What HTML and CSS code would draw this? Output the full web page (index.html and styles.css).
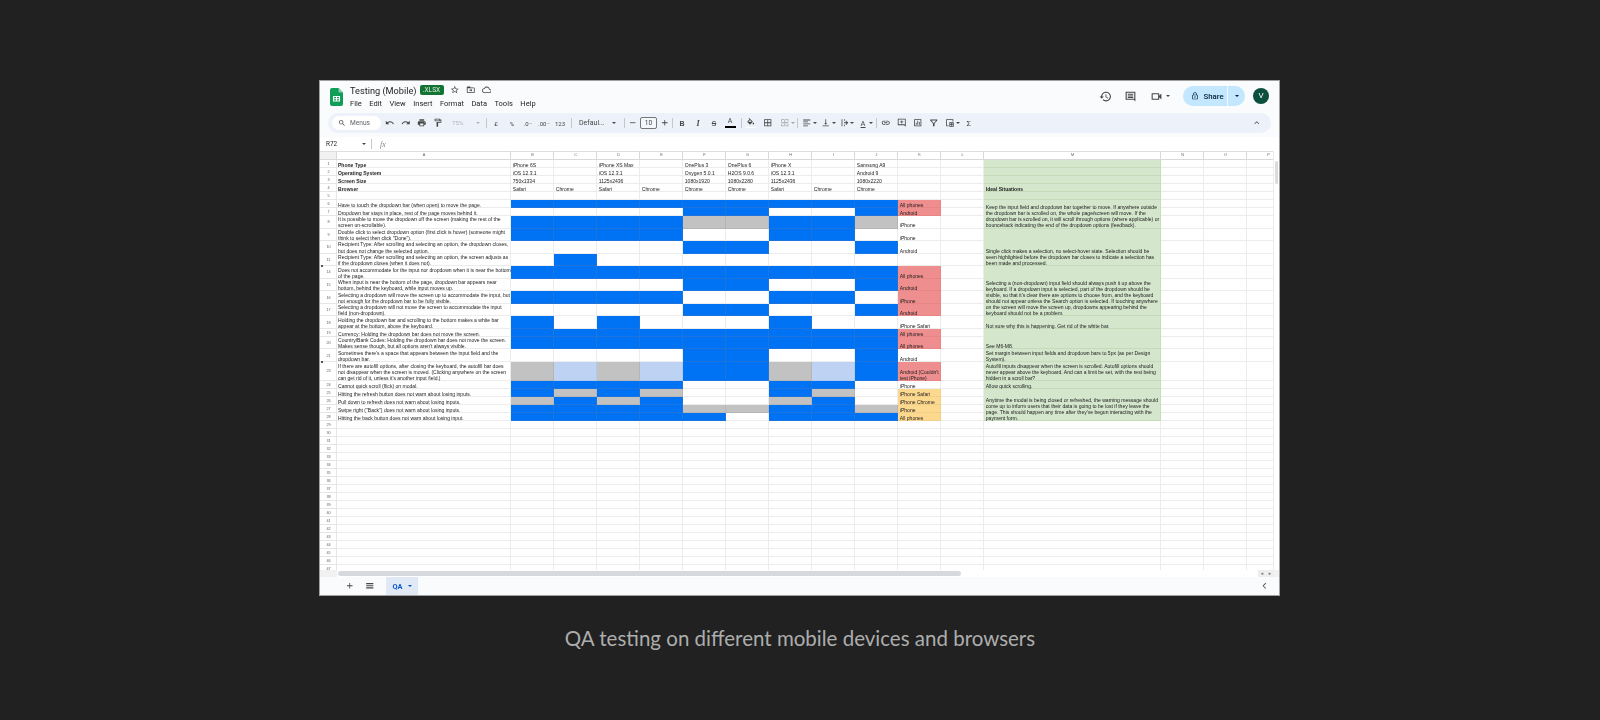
FILE: index.html
```html
<!DOCTYPE html>
<html lang="en">
<head>
    <meta charset="UTF-8">
    <title>QA testing</title>
    <link rel="stylesheet" href="styles.css">
</head>
<body>
<div class="window">
    <div class="head">
        <svg class="logo" viewBox="0 0 13 18"><path fill="#0f9d58" d="M2 0h6.5L13 4.5V16a2 2 0 0 1-2 2H2a2 2 0 0 1-2-2V2a2 2 0 0 1 2-2z"/><path fill="#87ceac" d="M8.5 0L13 4.5H9.5a1 1 0 0 1-1-1z"/><path fill="#fff" d="M3 8h7v5.5H3zM4 9v1.2h2V9zm3 0v1.2h2V9zm-3 2.2v1.3h2v-1.3zm3 0v1.3h2v-1.3z" fill-rule="evenodd"/></svg>
        <div class="doc">
            <div class="doc-title">
                <span class="name">Testing (Mobile)</span>
                <span class="badge">.XLSX</span>
                <span class="ic"><svg viewBox="0 0 24 24"><path d="M22 9.24l-7.19-.62L12 2 9.19 8.63 2 9.24l5.46 4.73L5.82 21 12 17.27 18.18 21l-1.63-7.03L22 9.24zM12 15.4l-3.76 2.27 1-4.28-3.32-2.88 4.38-.38L12 6.1l1.71 4.04 4.38.38-3.32 2.88 1 4.28L12 15.4z"/></svg></span>
                <span class="ic"><svg viewBox="0 0 24 24"><path d="M20 6h-8l-2-2H4c-1.1 0-2 .9-2 2v12c0 1.1.9 2 2 2h16c1.1 0 2-.9 2-2V8c0-1.1-.9-2-2-2zm0 12H4V8h16v10zm-8-1l4-4-4-4v3H8v2h4z"/></svg></span>
                <span class="ic"><svg viewBox="0 0 24 24"><path d="M19.35 10.04C18.67 6.59 15.64 4 12 4 9.11 4 6.6 5.64 5.35 8.04 2.34 8.36 0 10.91 0 14c0 3.31 2.69 6 6 6h13c2.76 0 5-2.24 5-5 0-2.64-2.05-4.78-4.65-4.96zM19 18H6c-2.21 0-4-1.79-4-4 0-2.05 1.53-3.76 3.56-3.97l1.07-.11.5-.95C8.08 7.14 9.94 6 12 6c2.62 0 4.88 1.86 5.39 4.43l.3 1.5 1.53.11c1.56.1 2.78 1.41 2.78 2.96 0 1.65-1.35 3-3 3z"/></svg></span>
            </div>
            <div class="menu">
                <span>File</span><span>Edit</span><span>View</span><span>Insert</span><span>Format</span><span>Data</span><span>Tools</span><span>Help</span>
            </div>
        </div>
        <div class="actions">
            <span class="act"><svg viewBox="0 0 24 24"><path d="M13 3c-4.97 0-9 4.03-9 9H1l3.89 3.89.07.14L9 12H6c0-3.87 3.13-7 7-7s7 3.13 7 7-3.13 7-7 7c-1.93 0-3.68-.79-4.94-2.06l-1.42 1.42C8.27 19.99 10.51 21 13 21c4.97 0 9-4.03 9-9s-4.03-9-9-9zm-1 5v5l4.28 2.54.72-1.21-3.5-2.08V8H12z"/></svg></span>
            <span class="act"><svg viewBox="0 0 24 24"><path d="M3 3h18v18l-3-3H3zm2 2v11h14V5zm2 2h10v1.8H7zm0 3h10v1.8H7zm0 3h10v1.8H7z" fill-rule="evenodd"/></svg></span>
            <span class="act act-meet"><svg viewBox="0 0 24 24"><path d="M15 8v8H5V8h10m1-2H4c-.55 0-1 .45-1 1v10c0 .55.45 1 1 1h12c.55 0 1-.45 1-1v-3.5l4 4v-11l-4 4V7c0-.55-.45-1-1-1z"/></svg><i class="car"></i></span>
            <div class="share">
                <span class="share-main"><svg viewBox="0 0 24 24"><path d="M18 8h-1V6c0-2.76-2.24-5-5-5S7 3.24 7 6v2H6c-1.1 0-2 .9-2 2v10c0 1.1.9 2 2 2h12c1.1 0 2-.9 2-2V10c0-1.1-.9-2-2-2zM9 6c0-1.66 1.34-3 3-3s3 1.34 3 3v2H9zm9 14H6V10h12zm-6-3c1.1 0 2-.9 2-2s-.9-2-2-2-2 .9-2 2 .9 2 2 2z"/></svg>Share</span>
                <span class="share-more"><i class="car"></i></span>
            </div>
            <span class="avatar">V</span>
        </div>
    </div>

    <div class="toolbar">
        <div class="search"><svg viewBox="0 0 24 24"><path d="M15.5 14h-.79l-.28-.27C15.41 12.59 16 11.11 16 9.5 16 5.91 13.09 3 9.5 3S3 5.91 3 9.5 5.91 16 9.5 16c1.61 0 3.09-.59 4.23-1.57l.27.28v.79l5 4.99L20.49 19l-4.99-5zm-6 0C7.01 14 5 11.99 5 9.5S7.01 5 9.5 5 14 7.01 14 9.5 11.99 14 9.5 14z"/></svg>Menus</div>
        <span class="ic"><svg viewBox="0 0 24 24"><path d="M12.5 8c-2.65 0-5.05.99-6.9 2.6L2 7v9h9l-3.62-3.62c1.39-1.16 3.16-1.88 5.12-1.88 3.54 0 6.55 2.31 7.6 5.5l2.37-.78C21.08 11.03 17.15 8 12.5 8z"/></svg></span>
        <span class="ic"><svg viewBox="0 0 24 24"><path d="M18.4 10.6C16.55 8.99 14.15 8 11.5 8c-4.65 0-8.58 3.03-9.96 7.22L3.9 16c1.05-3.19 4.05-5.5 7.6-5.5 1.95 0 3.73.72 5.12 1.88L13 16h9V7l-3.6 3.6z"/></svg></span>
        <span class="ic"><svg viewBox="0 0 24 24"><path d="M19 8H5c-1.66 0-3 1.34-3 3v6h4v4h12v-4h4v-6c0-1.66-1.34-3-3-3zm-3 11H8v-5h8v5zm3-7c-.55 0-1-.45-1-1s.45-1 1-1 1 .45 1 1-.45 1-1 1zm-1-9H6v4h12V3z"/></svg></span>
        <span class="ic"><svg viewBox="0 0 24 24"><path d="M18 4V3c0-.55-.45-1-1-1H5c-.55 0-1 .45-1 1v4c0 .55.45 1 1 1h12c.55 0 1-.45 1-1V6h1v4H9v11c0 .55.45 1 1 1h2c.55 0 1-.45 1-1v-9h8V4h-3zm-2 2H6V4h10z" fill-rule="evenodd"/></svg></span>
        <span class="zoom">75%<i class="car"></i></span>
        <i class="sep sep-a"></i>
        <span class="ic tx">£</span>
        <span class="ic tx">%</span>
        <span class="ic tx">.0<sub>←</sub></span>
        <span class="ic tx">.00<sub>→</sub></span>
        <span class="ic tx">123</span>
        <i class="sep sep-b"></i>
        <span class="font">Defaul...<i class="car"></i></span>
        <i class="sep sep-a"></i>
        <span class="ic ic-s"><svg viewBox="0 0 24 24"><path d="M5 11h14v2H5z"/></svg></span>
        <span class="size">10</span>
        <span class="ic ic-s ic-plus"><svg viewBox="0 0 24 24"><path d="M11 5h2v6h6v2h-6v6h-2v-6H5v-2h6z"/></svg></span>
        <i class="sep sep-c"></i>
        <span class="ic tx bold">B</span>
        <span class="ic tx ital">I</span>
        <span class="ic tx strike">S</span>
        <span class="ic tx color">A</span>
        <i class="sep sep-d"></i>
        <span class="ic fill"><svg viewBox="0 0 24 24"><path d="M16.56 8.94L7.62 0 6.21 1.41l2.38 2.38-5.15 5.15c-.59.59-.59 1.54 0 2.12l5.5 5.5c.29.29.68.44 1.06.44s.77-.15 1.06-.44l5.5-5.5c.59-.58.59-1.53 0-2.12zM5.21 10L10 5.21 14.79 10H5.21zM19 11.5s-2 2.17-2 3.5c0 1.1.9 2 2 2s2-.9 2-2c0-1.33-2-3.5-2-3.5z"/></svg></span>
        <span class="ic ic-g"><svg viewBox="0 0 24 24"><path d="M3 3h18v18H3zm2 2v6h6V5zm8 0v6h6V5zM5 13v6h6v-6zm8 0v6h6v-6z" fill-rule="evenodd"/></svg></span>
        <span class="ic ic-g off"><svg viewBox="0 0 24 24"><path d="M3 3h7v2H5v4H3zm11 0h7v6h-2V5h-5zM3 15h2v4h5v2H3zm16 0h2v6h-7v-2h5zM11 3h2v7h-2zm0 11h2v7h-2zM3 11h18v2H3z"/></svg></span>
        <i class="car car-n off"></i>
        <i class="sep sep-e"></i>
        <span class="ic"><svg viewBox="0 0 24 24"><path d="M3 4h18v2H3zm0 5h12v2H3zm0 5h18v2H3zm0 5h12v2H3z"/></svg></span>
        <i class="car car-n"></i>
        <span class="ic"><svg viewBox="0 0 24 24"><path d="M16 13h-3V3h-2v10H8l4 4 4-4zM4 19v2h16v-2H4z"/></svg></span>
        <i class="car car-n"></i>
        <span class="ic"><svg viewBox="0 0 24 24"><path d="M4 3h2v18H4zm6 8h7l-3-3 1.4-1.4L21 12l-5.6 5.4L14 16l3-3h-7zm0-8h2v4h-2zm0 14h2v4h-2z"/></svg></span>
        <i class="car car-n"></i>
        <span class="ic tx rotate">A</span>
        <i class="car car-n"></i>
        <i class="sep sep-f"></i>
        <span class="ic"><svg viewBox="0 0 24 24"><path d="M3.9 12c0-1.71 1.39-3.1 3.1-3.1h4V7H7c-2.76 0-5 2.24-5 5s2.24 5 5 5h4v-1.9H7c-1.71 0-3.1-1.39-3.1-3.1zM8 13h8v-2H8v2zm9-6h-4v1.9h4c1.71 0 3.1 1.39 3.1 3.1s-1.39 3.1-3.1 3.1h-4V17h4c2.76 0 5-2.24 5-5s-2.24-5-5-5z"/></svg></span>
        <span class="ic"><svg viewBox="0 0 24 24"><path d="M2 2h20v20l-4-4H2zm2 2v12h15l1 1V4zm7 2h2v3h3v2h-3v3h-2v-3H8V9h3z" fill-rule="evenodd"/></svg></span>
        <span class="ic"><svg viewBox="0 0 24 24"><path d="M3 3h18v18H3zm2 2v14h14V5zm2 7h2v5H7zm4-5h2v10h-2zm4 3h2v7h-2z" fill-rule="evenodd"/></svg></span>
        <span class="ic"><svg viewBox="0 0 24 24"><path d="M3 4h18v2l-7 8v7h-4v-7L3 6zm3 2l6 7 6-7z" fill-rule="evenodd"/></svg></span>
        <span class="ic"><svg viewBox="0 0 24 24"><path d="M3 3h18v6h-2V5H5v14h4v2H3zm8 8h11v11H11zm2 2v2h3v-2zm5 0v2h2v-2zm-5 4v3h3v-3zm5 0v3h2v-3z" fill-rule="evenodd"/></svg></span>
        <i class="car car-n"></i>
        <span class="ic tx sigma">Σ</span>
        <span class="ic collapse"><svg viewBox="0 0 24 24"><path d="M12 8l-6 6 1.4 1.4 4.6-4.6 4.6 4.6L18 14z"/></svg></span>
    </div>

    <div class="formula">
        <span class="cell-ref">R72</span>
        <i class="car"></i>
        <i class="sep"></i>
        <span class="fx">fx</span>
    </div>

    <div class="sheet">
        <div class="grid">
            <table>
                <colgroup>
                    <col class="c-h"><col class="c-a">
                    <col class="c-n"><col class="c-n"><col class="c-n"><col class="c-n"><col class="c-n"><col class="c-n"><col class="c-n"><col class="c-n"><col class="c-n">
                    <col class="c-n"><col class="c-n"><col class="c-m"><col class="c-n"><col class="c-n"><col class="c-n">
                </colgroup>
                <tr class="letters"><th></th><th>A</th><th>B</th><th>C</th><th>D</th><th>E</th><th>F</th><th>G</th><th>H</th><th>I</th><th>J</th><th>K</th><th>L</th><th>M</th><th>N</th><th>O</th><th>P</th></tr>
                <tr><th>1</th><td class="lb">Phone Type</td><td>iPhone 6S</td><td></td><td>iPhone XS Max</td><td></td><td>OnePlus 3</td><td>OnePlus 6</td><td>iPhone X</td><td></td><td>Samsung A9</td><td></td><td></td><td class="m"></td><td></td><td></td><td></td></tr>
                <tr><th>2</th><td class="lb">Operating System</td><td>iOS 12.3.1</td><td></td><td>iOS 12.3.1</td><td></td><td>Oxygen 5.0.1</td><td>H2OS 9.0.6</td><td>iOS 12.3.1</td><td></td><td>Android 9</td><td></td><td></td><td class="m"></td><td></td><td></td><td></td></tr>
                <tr><th>3</th><td class="lb">Screen Size</td><td>750x1334</td><td></td><td>1125x2436</td><td></td><td>1080x1920</td><td>1080x2280</td><td>1125x2436</td><td></td><td>1080x2220</td><td></td><td></td><td class="m"></td><td></td><td></td><td></td></tr>
                <tr><th>4</th><td class="lb">Browser</td><td>Safari</td><td>Chrome</td><td>Safari</td><td>Chrome</td><td>Chrome</td><td>Chrome</td><td>Safari</td><td>Chrome</td><td>Chrome</td><td></td><td></td><td class="m lb">Ideal Situations</td><td></td><td></td><td></td></tr>
                <tr><th>5</th><td></td><td></td><td></td><td></td><td></td><td></td><td></td><td></td><td></td><td></td><td></td><td></td><td class="m"></td><td></td><td></td><td></td></tr>
                <tr><th>6</th><td>Have to touch the dropdown bar (when open) to move the page.</td><td class="b"></td><td class="b"></td><td class="b"></td><td class="b"></td><td class="b"></td><td class="b"></td><td class="b"></td><td class="b"></td><td class="b"></td><td class="r">All phones</td><td></td><td class="m" rowspan="3">Keep the input field and dropdown bar together to move. If anywhere outside the dropdown bar is scrolled on, the whole page/screen will move. If the dropdown bar is scrolled on, it will scroll through options (where applicable) or bounceback indicating the end of the dropdown options (feedback).</td><td></td><td></td><td></td></tr>
                <tr><th>7</th><td>Dropdown bar stays in place, rest of the page moves behind it.</td><td></td><td></td><td></td><td></td><td class="b"></td><td class="b"></td><td></td><td></td><td class="b"></td><td class="r">Android</td><td></td><td></td><td></td><td></td></tr>
                <tr class="t2"><th>8</th><td>It is possible to move the dropdown off the screen (making the rest of the screen un-scrollable).</td><td class="b"></td><td class="b"></td><td class="b"></td><td class="b"></td><td class="g"></td><td class="g"></td><td class="b"></td><td class="b"></td><td class="g"></td><td>iPhone</td><td></td><td></td><td></td><td></td></tr>
                <tr class="t2"><th>9</th><td>Double click to select dropdown option (first click is hover) (someone might think to select then click "Done").</td><td class="b"></td><td class="b"></td><td class="b"></td><td class="b"></td><td></td><td></td><td class="b"></td><td class="b"></td><td></td><td>iPhone</td><td></td><td class="m" rowspan="3">Single click makes a selection, no select-hover state. Selection should be seen highlighted before the dropdown bar closes to indicate a selection has been made and processed.</td><td></td><td></td><td></td></tr>
                <tr class="t2"><th>10</th><td>Recipient Type: After scrolling and selecting an option, the dropdown closes, but does not change the selected option.</td><td></td><td></td><td></td><td></td><td class="b"></td><td class="b"></td><td></td><td></td><td class="b"></td><td>Android</td><td></td><td></td><td></td><td></td></tr>
                <tr class="t2"><th class="fold-b">11</th><td>Recipient Type: After scrolling and selecting an option, the screen adjusts as if the dropdown closes (when it does not).</td><td></td><td class="b"></td><td></td><td></td><td></td><td></td><td></td><td></td><td></td><td></td><td></td><td></td><td></td><td></td></tr>
                <tr class="t2"><th class="fold-t">14</th><td>Does not accommodate for the input nor dropdown when it is near the bottom of the page.</td><td class="b"></td><td class="b"></td><td class="b"></td><td class="b"></td><td class="b"></td><td class="b"></td><td class="b"></td><td class="b"></td><td class="b"></td><td class="r">All phones</td><td></td><td class="m" rowspan="4">Selecting a (non-dropdown) input field should always push it up above the keyboard. If a dropdown input is selected, part of the dropdown should be visible, so that it's clear there are options to choose from, and the keyboard should not appear unless the Search option is selected. If touching anywhere on the screen will move the screen up, dropdowns appearing behind the keyboard should not be a problem.</td><td></td><td></td><td></td></tr>
                <tr class="t2"><th>15</th><td>When input is near the bottom of the page, dropdown bar appears near bottom, behind the keyboard, while input moves up.</td><td></td><td></td><td></td><td></td><td class="b"></td><td class="b"></td><td></td><td></td><td class="b"></td><td class="r">Android</td><td></td><td></td><td></td><td></td></tr>
                <tr class="t2"><th>16</th><td>Selecting a dropdown will move the screen up to accommodate the input, but not enough for the dropdown bar to be fully visible.</td><td class="b"></td><td class="b"></td><td class="b"></td><td class="b"></td><td></td><td></td><td class="b"></td><td class="b"></td><td></td><td class="r">iPhone</td><td></td><td></td><td></td><td></td></tr>
                <tr class="t2"><th>17</th><td>Selecting a dropdown will not move the screen to accommodate the input field (non-dropdown).</td><td></td><td></td><td></td><td></td><td class="b"></td><td class="b"></td><td></td><td></td><td class="b"></td><td class="r">Android</td><td></td><td></td><td></td><td></td></tr>
                <tr class="t2"><th>18</th><td>Holding the dropdown bar and scrolling to the bottom makes a white bar appear at the bottom, above the keyboard.</td><td class="b"></td><td></td><td class="b"></td><td></td><td></td><td></td><td class="b"></td><td></td><td></td><td>iPhone Safari</td><td></td><td class="m">Not sure why this is happening. Get rid of the white bar.</td><td></td><td></td><td></td></tr>
                <tr><th>19</th><td>Currency: Holding the dropdown bar does not move the screen.</td><td class="b"></td><td class="b"></td><td class="b"></td><td class="b"></td><td class="b"></td><td class="b"></td><td class="b"></td><td class="b"></td><td class="b"></td><td class="r">All phones</td><td></td><td class="m" rowspan="2">See M6-M8.</td><td></td><td></td><td></td></tr>
                <tr class="t2"><th>20</th><td>Country/Bank Codes: Holding the dropdown bar does not move the screen. Makes sense though, but all options aren't always visible.</td><td class="b"></td><td class="b"></td><td class="b"></td><td class="b"></td><td class="b"></td><td class="b"></td><td class="b"></td><td class="b"></td><td class="b"></td><td class="r">All phones</td><td></td><td></td><td></td><td></td></tr>
                <tr class="t2"><th class="fold-b">21</th><td>Sometimes there's a space that appears between the input field and the dropdown bar.</td><td></td><td></td><td></td><td></td><td class="b"></td><td class="b"></td><td></td><td></td><td class="b"></td><td>Android</td><td></td><td class="m">Set margin between input fields and dropdown bars to 5px (as per Design System).</td><td></td><td></td><td></td></tr>
                <tr class="t3"><th class="fold-t">23</th><td>If there are autofill options, after closing the keyboard, the autofill bar does not disappear when the screen is moved. (Clicking anywhere on the screen can get rid of it, unless it's another input field.)</td><td class="g"></td><td class="l"></td><td class="g"></td><td class="l"></td><td class="b"></td><td class="b"></td><td class="g"></td><td class="l"></td><td class="b"></td><td class="r">Android (Couldn't test iPhone)</td><td></td><td class="m">Autofill inputs disappear when the screen is scrolled. Autofill options should never appear above the keyboard. And can a limit be set, with the rest being hidden in a scroll bar?</td><td></td><td></td><td></td></tr>
                <tr><th>24</th><td>Cannot quick scroll (flick) on modal.</td><td class="b"></td><td class="b"></td><td class="b"></td><td class="b"></td><td></td><td></td><td class="b"></td><td class="b"></td><td></td><td>iPhone</td><td></td><td class="m">Allow quick scrolling.</td><td></td><td></td><td></td></tr>
                <tr><th>25</th><td>Hitting the refresh button does not warn about losing inputs.</td><td class="b"></td><td class="g"></td><td class="b"></td><td class="g"></td><td></td><td></td><td class="b"></td><td class="g"></td><td></td><td class="y">iPhone Safari</td><td></td><td class="m" rowspan="4">Anytime the modal is being closed or refreshed, the warning message should come up to inform users that their data is going to be lost if they leave the page. This should happen any time after they've begun interacting with the payment form.</td><td></td><td></td><td></td></tr>
                <tr><th>26</th><td>Pull down to refresh does not warn about losing inputs.</td><td class="g"></td><td class="b"></td><td class="g"></td><td class="b"></td><td></td><td></td><td class="g"></td><td class="b"></td><td></td><td class="y">iPhone Chrome</td><td></td><td></td><td></td><td></td></tr>
                <tr><th>27</th><td>Swipe right ("Back") does not warn about losing inputs.</td><td class="b"></td><td class="b"></td><td class="b"></td><td class="b"></td><td class="g"></td><td class="g"></td><td class="b"></td><td class="b"></td><td class="g"></td><td class="y">iPhone</td><td></td><td></td><td></td><td></td></tr>
                <tr><th>28</th><td>Hitting the back button does not warn about losing input.</td><td class="b"></td><td class="b"></td><td class="b"></td><td class="b"></td><td class="b"></td><td></td><td class="b"></td><td class="b"></td><td class="b"></td><td class="y">All phones</td><td></td><td></td><td></td><td></td></tr>
                <tr><th>29</th><td></td><td></td><td></td><td></td><td></td><td></td><td></td><td></td><td></td><td></td><td></td><td></td><td></td><td></td><td></td><td></td></tr>
                <tr><th>30</th><td></td><td></td><td></td><td></td><td></td><td></td><td></td><td></td><td></td><td></td><td></td><td></td><td></td><td></td><td></td><td></td></tr>
                <tr><th>31</th><td></td><td></td><td></td><td></td><td></td><td></td><td></td><td></td><td></td><td></td><td></td><td></td><td></td><td></td><td></td><td></td></tr>
                <tr><th>32</th><td></td><td></td><td></td><td></td><td></td><td></td><td></td><td></td><td></td><td></td><td></td><td></td><td></td><td></td><td></td><td></td></tr>
                <tr><th>33</th><td></td><td></td><td></td><td></td><td></td><td></td><td></td><td></td><td></td><td></td><td></td><td></td><td></td><td></td><td></td><td></td></tr>
                <tr><th>34</th><td></td><td></td><td></td><td></td><td></td><td></td><td></td><td></td><td></td><td></td><td></td><td></td><td></td><td></td><td></td><td></td></tr>
                <tr><th>35</th><td></td><td></td><td></td><td></td><td></td><td></td><td></td><td></td><td></td><td></td><td></td><td></td><td></td><td></td><td></td><td></td></tr>
                <tr><th>36</th><td></td><td></td><td></td><td></td><td></td><td></td><td></td><td></td><td></td><td></td><td></td><td></td><td></td><td></td><td></td><td></td></tr>
                <tr><th>37</th><td></td><td></td><td></td><td></td><td></td><td></td><td></td><td></td><td></td><td></td><td></td><td></td><td></td><td></td><td></td><td></td></tr>
                <tr><th>38</th><td></td><td></td><td></td><td></td><td></td><td></td><td></td><td></td><td></td><td></td><td></td><td></td><td></td><td></td><td></td><td></td></tr>
                <tr><th>39</th><td></td><td></td><td></td><td></td><td></td><td></td><td></td><td></td><td></td><td></td><td></td><td></td><td></td><td></td><td></td><td></td></tr>
                <tr><th>40</th><td></td><td></td><td></td><td></td><td></td><td></td><td></td><td></td><td></td><td></td><td></td><td></td><td></td><td></td><td></td><td></td></tr>
                <tr><th>41</th><td></td><td></td><td></td><td></td><td></td><td></td><td></td><td></td><td></td><td></td><td></td><td></td><td></td><td></td><td></td><td></td></tr>
                <tr><th>42</th><td></td><td></td><td></td><td></td><td></td><td></td><td></td><td></td><td></td><td></td><td></td><td></td><td></td><td></td><td></td><td></td></tr>
                <tr><th>43</th><td></td><td></td><td></td><td></td><td></td><td></td><td></td><td></td><td></td><td></td><td></td><td></td><td></td><td></td><td></td><td></td></tr>
                <tr><th>44</th><td></td><td></td><td></td><td></td><td></td><td></td><td></td><td></td><td></td><td></td><td></td><td></td><td></td><td></td><td></td><td></td></tr>
                <tr><th>45</th><td></td><td></td><td></td><td></td><td></td><td></td><td></td><td></td><td></td><td></td><td></td><td></td><td></td><td></td><td></td><td></td></tr>
                <tr><th>46</th><td></td><td></td><td></td><td></td><td></td><td></td><td></td><td></td><td></td><td></td><td></td><td></td><td></td><td></td><td></td><td></td></tr>
                <tr><th>47</th><td></td><td></td><td></td><td></td><td></td><td></td><td></td><td></td><td></td><td></td><td></td><td></td><td></td><td></td><td></td><td></td></tr>
            </table>
        </div>
        <div class="vscroll"><div class="vthumb"></div></div>
    </div>

    <div class="hscroll">
        <div class="hcorner"></div>
        <div class="htrack"><div class="hthumb"></div></div>
        <span class="harrow">◂</span>
        <span class="harrow">▸</span>
        <div class="hend"></div>
    </div>

    <div class="tabs">
        <span class="ic"><svg viewBox="0 0 24 24"><path d="M11 5h2v6h6v2h-6v6h-2v-6H5v-2h6z"/></svg></span>
        <span class="ic"><svg viewBox="0 0 24 24"><path d="M3 5h18v3H3zm0 5.5h18v3H3zM3 16h18v3H3z"/></svg></span>
        <span class="tab">QA<i class="car"></i></span>
        <span class="ic tabs-end"><svg viewBox="0 0 24 24"><path d="M15.4 6L9.4 12l6 6L14 19.4 6.6 12 14 4.6z"/></svg></span>
    </div>
</div>
<p class="caption">QA testing on different mobile devices and browsers</p>
</body>
</html>
```

FILE: styles.css
```css
*{
    margin:0;padding:0;
    box-sizing: border-box;
}
body{
    background:#212121;
    font-family:"Liberation Sans",Arial,sans-serif;
    height:720px;
    overflow:hidden;
}
.window{
    width:961px;
    height:516px;
    margin:80px 0 0 319px;
    border:1px solid #a0a0a0;
    background:#f9fbfd;
    display:flex;
    flex-direction:column;
    color:#444746;
    font-family:Roboto,"Liberation Sans",sans-serif;
    filter:blur(.35px);
}
.caption{
    margin-top:29px;
    text-align:center;
    font-family:Lato,"Open Sans",sans-serif;
    font-size:20.5px;
    line-height:26px;
    color:#adadad;
}

/* shared bits */
.ic{
    width:16px;
    height:14px;
    flex:none;
    display:flex;
    align-items:center;
    justify-content:center;
    font-style:normal;
}
.ic svg{
    width:9.5px;
    height:9.5px;
    fill:#444746;
}
.car{
    display:inline-block;
    width:0;height:0;
    border-left:2.5px solid transparent;
    border-right:2.5px solid transparent;
    border-top:2.5px solid #444746;
    flex:none;
}
.car-n{
    margin:0 3.2px 0 .5px;
}
.off{
    opacity:.45;
}
.sep{
    display:block;
    width:1px;
    height:10px;
    background:#c7c7c7;
    flex:none;
}

/* title bar */
.head{
    height:32px;
    flex:none;
    display:flex;
    padding:7px 0 0 10px;
}
.logo{
    width:13px;
    height:18px;
    flex:none;
}
.doc{
    margin-left:7px;
}
.doc-title{
    display:flex;
    align-items:center;
    height:10px;
    margin-top:-3px;
}
.name{
    font-size:9.2px;
    color:#1f1f1f;
    width:69.5px;
    white-space:nowrap;
}
.badge{
    width:24px;
    height:10px;
    background:#137333;
    color:#d8efdf;
    border-radius:2px;
    font-size:6.6px;
    line-height:10px;
    text-align:center;
}
.doc-title .ic{
    margin-left:0;
}
.doc-title .ic:nth-child(3){
    margin-left:3px;
}
.menu{
    display:flex;
    margin-top:4px;
    font-size:7.5px;
    line-height:10px;
    color:#1f1f1f;
    gap:7.5px;
}
.actions{
    margin-left:auto;
    display:flex;
    align-items:center;
    height:20px;
    margin-top:-2px;
    padding-right:10px;
}
.act{
    width:25px;
    display:flex;
    align-items:center;
    justify-content:center;
}
.act svg{
    width:13px;
    height:13px;
    fill:#444746;
}
.act-meet{
    width:30px;
    gap:3px;
    margin-left:2px;
    margin-right:8px;
}
.share{
    width:62px;
    height:20px;
    display:flex;
    background:#c2e7ff;
    border-radius:10px;
    color:#001d35;
    font-size:7.8px;
    font-weight:500;
}
.share-main{
    width:45px;
    display:flex;
    align-items:center;
    justify-content:center;
    gap:4px;
    padding-left:5px;
    border-right:1px solid #f0f8fd;
}
.share-main svg{
    width:8px;
    height:8px;
    fill:#001d35;
}
.share-more{
    flex:1;
    display:flex;
    align-items:center;
    justify-content:center;
}
.share-more .car{
    border-top-color:#001d35;
}
.avatar{
    width:16px;
    height:16px;
    margin-left:8px;
    border-radius:50%;
    background:#0b4f3c;
    color:#fff;
    font-size:8px;
    line-height:16px;
    text-align:center;
}

/* toolbar */
.toolbar{
    height:20px;
    flex:none;
    margin:0 8px;
    padding-left:4px;
    background:#edf2fa;
    border-radius:10px;
    display:flex;
    align-items:center;
    font-size:6.2px;
}
.search{
    width:49px;
    height:14px;
    margin-right:1px;
    background:#fff;
    border-radius:7px;
    display:flex;
    align-items:center;
    padding-left:6px;
    gap:4px;
    font-size:6.6px;
    color:#5f6368;
    flex:none;
}
.search svg{
    width:8px;
    height:8px;
    fill:#444746;
}
.tx{
    color:#444746;
    font-size:6px;
    white-space:nowrap;
}
.tx sub{
    font-size:3.5px;
    vertical-align:-1px;
    line-height:0;
}
.zoom{
    width:38px;
    padding-left:6px;
    color:#b0b4ba;
    display:flex;
    align-items:center;
    justify-content:space-between;
    padding-right:4px;
}
.zoom .car{
    border-top-color:#b0b4ba;
}
.sep-a{
    margin:0 1.5px;
}
.sep-b{
    margin:0 2.5px;
}
.font{
    width:48px;
    padding:0 6px 0 5px;
    font-size:7px;
    display:flex;
    align-items:center;
    justify-content:space-between;
    white-space:nowrap;
}
.ic-s{
    width:14px;
}
.ic-plus{
    margin-left:1px;
}
.size{
    width:17px;
    height:12px;
    border:1px solid #747775;
    border-radius:2px;
    font-size:6.6px;
    line-height:10px;
    text-align:center;
    background:#f4f7fb;
}
.sep-c{
    margin-right:1px;
}
.bold{
    font-weight:700;
    font-family:"Liberation Sans",sans-serif;
    font-size:7px;
}
.ital{
    font-style:italic;
    font-family:"Liberation Serif",serif;
    font-size:8px;
    font-weight:700;
}
.strike{
    text-decoration:line-through;
    font-size:7.5px;
}
.color{
    font-size:7px;
    flex-direction:column;
    line-height:7px;
}
.color::after{
    content:"";
    width:11px;
    height:1.6px;
    background:#000;
    margin-top:1px;
}
.sep-d{
    margin:0 1.5px 0 2.5px;
}
.fill svg{
    height:9px;
    border-bottom:1.5px solid #fff;
    box-sizing:content-box;
}
.ic-g{
    margin-left:1px;
}
.sep-e{
    margin:0 .5px 0 1.8px;
}
.toolbar .ic + .car-n{
    margin:0 .7px 0 -2px;
}
.sep-f{
    margin:0 1px 0 2.3px;
}
.rotate{
    text-decoration:underline;
    font-size:7.5px;
}
.sigma{
    font-size:8px;
}
.collapse{
    margin-left:auto;
    margin-right:6px;
}

/* formula bar */
.formula{
    height:14px;
    flex:none;
    margin-top:4px;
    background:#fff;
    display:flex;
    align-items:center;
    font-size:6.4px;
    color:#1f1f1f;
}
.cell-ref{
    width:42px;
    padding-left:6px;
}
.formula .car{
    margin-right:5px;
}
.fx{
    margin-left:8px;
    font-family:"Liberation Serif",serif;
    font-style:italic;
    font-size:8px;
    color:#80868b;
}

/* cells */
.sheet{
    height:419px;
    flex:none;
    display:flex;
    background:#fff;
}
.grid{
    width:953px;
    flex:none;
    overflow:hidden;
}
table{
    table-layout:fixed;
    width:970px;
    border-spacing:0;
    font-family:"Liberation Sans",Arial,sans-serif;
    font-size:5.05px;
    line-height:6.1px;
    color:#1c1c1c;
}
.c-h{width:17px}
.c-a{width:174px}
.c-n{width:43px}
.c-m{width:177px}
tr{
    height:8px;
}
tr.t2{
    height:12.55px;
}
tr.t3{
    height:19px;
}
tr.letters{
    height:9px;
}
th{
    font-weight:normal;
    font-size:3.8px;
    color:#5f6368;
    text-align:center;
    vertical-align:middle;
    box-shadow:inset -1px -1px 0 #e6e6e6;
    position:relative;
}
.letters th{
    box-shadow:inset -1px -1px 0 #d8d8d8, inset 0 1px 0 #dedede;
}
.letters th:first-child{
    background:#f1f1f1;
}
td{
    --line:#ececec;
    padding:0 0 0 1.8px;
    vertical-align:bottom;
    box-shadow:inset -1px -1px 0 var(--line);
    overflow:hidden;
}
th + td{
    padding-left:1px;
}
.lb{
    font-weight:700;
}
.b{
    background:#0073f5;
    --line:#1c74dc;
}
.g{
    background:#c2c2c2;
    --line:#b5b5b5;
}
.l{
    background:#bed3f3;
    --line:#b0c8ec;
}
.r{
    background:#ef8e8e;
    --line:#e88585;
}
.y{
    background:#fdd98f;
    --line:#f2cf88;
}
.m{
    background:#d4e6cc;
    --line:#c5dcbb;
}
.fold-b::before,
.fold-t::before{
    content:"";
    position:absolute;
    left:1px;
    width:2px;
    height:1px;
    background:#555;
}
.fold-b::before{
    bottom:0;
}
.fold-t::before{
    top:0;
}

/* scroll bars */
.vscroll{
    flex:1;
    padding:10px 1px 0;
    border-left:1px solid #ececec;
}
.vthumb{
    height:23px;
    background:#d9dcdf;
    border-radius:3px;
}
.hscroll{
    height:7px;
    flex:none;
    display:flex;
    align-items:center;
    background:#fff;
}
.hcorner{
    width:17px;
    height:7px;
    background:#f1f1f1;
    flex:none;
}
.htrack{
    width:921px;
    flex:none;
}
.hthumb{
    width:623px;
    height:5px;
    margin-left:1px;
    background:#d6d9dd;
    border-radius:3px;
}
.harrow{
    width:8px;
    height:7px;
    flex:none;
    font-size:5px;
    line-height:7px;
    text-align:center;
    color:#777;
    background:#eee;
    font-family:"DejaVu Sans",sans-serif;
}
.hend{
    flex:1;
    height:7px;
    background:#f1f1f1;
}

/* sheet tabs */
.tabs{
    flex:1;
    display:flex;
    align-items:center;
    padding-left:22px;
    gap:4px;
}
.tab{
    width:32px;
    height:100%;
    margin-left:4px;
    background:#e1e9f7;
    color:#0b57d0;
    font-size:7.4px;
    font-weight:700;
    display:flex;
    align-items:center;
    justify-content:center;
    gap:5px;
}
.tab .car{
    border-top-color:#0b57d0;
}
.tabs-end{
    margin-left:auto;
    margin-right:6px;
}
```
